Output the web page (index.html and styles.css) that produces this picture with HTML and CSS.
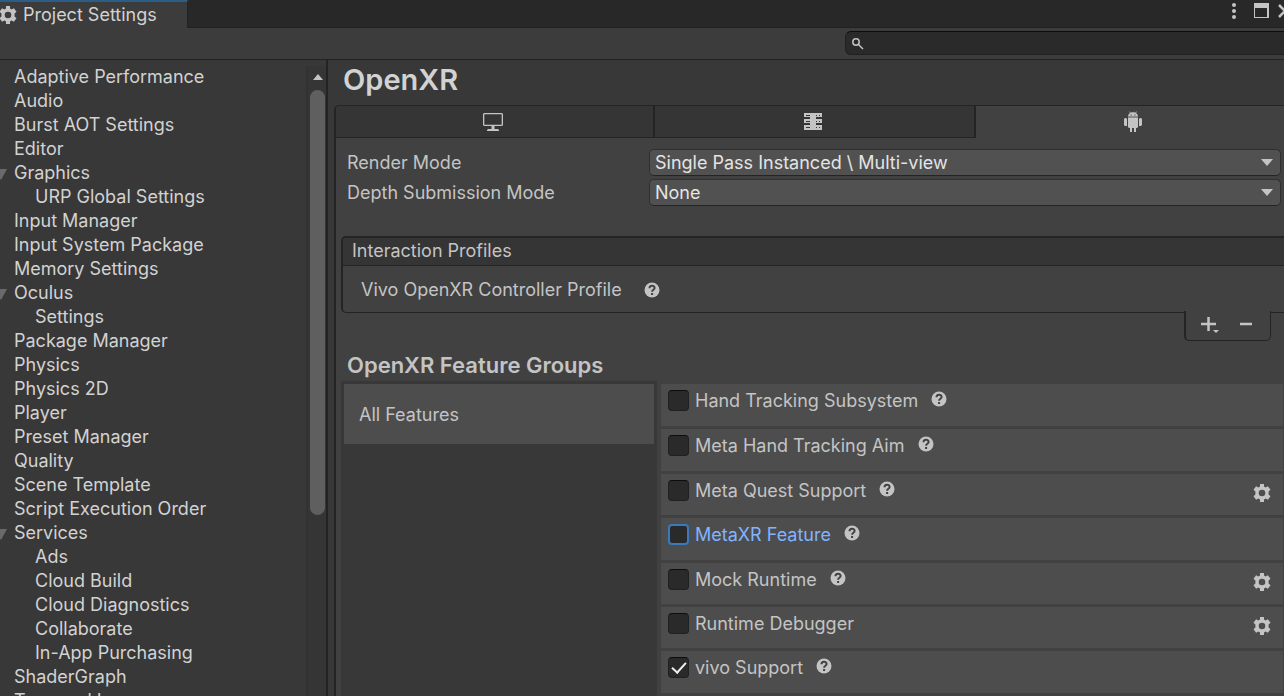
FILE: index.html
```html
<!DOCTYPE html>
<html lang="en">
<head>
<meta charset="utf-8">
<title>Project Settings</title>
<link rel="stylesheet" href="styles.css">
</head>
<body>
<svg class="defs" aria-hidden="true">
  <symbol id="gear" viewBox="0 0 18 18"><path fill-rule="evenodd" d="M7 0h4v2.600l1.600.900 2.300-1.300 2.600 3.600-1.900 1.800v2.800l1.900 1.800-2.600 3.600-2.300-1.300-1.600.900V18H7v-2.600l-1.600-.900-2.300 1.300-2.600-3.600 1.900-1.800V7.600L.500 5.800l2.600-3.600 2.300 1.300L7 2.600zM9 5.700a3.300 3.300 0 1 0 0 6.600 3.300 3.300 0 0 0 0-6.600z"/></symbol>
  <symbol id="help" viewBox="0 0 16 16"><circle cx="8" cy="8" r="7.500"/><path class="mark" d="M5.500 6.200C5.500 3 10.600 3 10.600 6c0 1.800-2.500 1.700-2.500 3.700M8.100 10.900v2"/></symbol>
</svg>
<header class="tabbar">
  <button class="wintab"><svg class="gear" aria-hidden="true"><use href="#gear"/></svg>Project Settings</button>
  <div class="wincontrols">
    <button aria-label="Menu"><svg width="6" height="18" viewBox="0 0 6 18"><circle cx="3" cy="3" r="2"/><circle cx="3" cy="9" r="2"/><circle cx="3" cy="15" r="2"/></svg></button>
    <button aria-label="Maximize"><svg width="16" height="16" viewBox="0 0 16 16"><path fill-rule="evenodd" d="M0 0h15v15H0zM1 5v9h12V5z"/></svg></button>
    <button aria-label="Close"><svg width="14" height="14" viewBox="0 0 14 14"><path class="line" d="M1 1l12 12M13 1L1 13"/></svg></button>
  </div>
</header>
<div class="toolbar">
  <label class="search"><svg width="12" height="12" viewBox="0 0 12 12"><circle class="ring" cx="4" cy="4" r="3.200"/><path class="ring" d="M6.500 6.500L11 11"/></svg><input type="text" aria-label="Search settings"></label>
</div>
<div class="body">
  <nav class="sidebar">
    <ul>
      <li>Adaptive Performance</li><li>Audio</li><li>Burst AOT Settings</li><li>Editor</li>
      <li class="open">Graphics</li><li class="sub">URP Global Settings</li>
      <li>Input Manager</li><li>Input System Package</li><li>Memory Settings</li>
      <li class="open">Oculus</li><li class="sub">Settings</li>
      <li>Package Manager</li><li>Physics</li><li>Physics 2D</li><li>Player</li><li>Preset Manager</li>
      <li>Quality</li><li>Scene Template</li><li>Script Execution Order</li>
      <li class="open">Services</li><li class="sub">Ads</li><li class="sub">Cloud Build</li><li class="sub">Cloud Diagnostics</li><li class="sub">Collaborate</li><li class="sub">In-App Purchasing</li>
      <li>ShaderGraph</li><li>Tags and Layers</li>
    </ul>
    <div class="scrollbar"><span class="up"></span><span class="thumb"></span></div>
  </nav>
  <main>
    <h1>OpenXR</h1>
    <section class="panel">
      <div class="platforms">
        <button aria-label="Desktop"><svg width="22" height="18" viewBox="0 0 22 18"><path fill-rule="evenodd" d="M2 0h18l1 1v11l-1 1h-7.500v3H16l1 1v1H5v-1l1-1h3.500v-3H2l-1-1V1zM2.300 1.300v10.400h17.400V1.300z"/></svg></button>
        <button aria-label="Dedicated server"><svg width="18" height="17" viewBox="0 0 18 17"><path fill-rule="evenodd" d="M0 0h18v4h-6v2h6v4h-6v2h6v5H0v-5h6v-2H0V6h6V4H0zM2 2v1h4V2zM12 2v1h1V2zM15 2v1h1V2zM2 8v1h4V8zM12 8v1h1V8zM15 8v1h1V8zM2 14v1h4v-1zM12 14v1h1v-1zM15 14v1h1v-1z"/></svg></button>
        <button class="active" aria-label="Android"><svg width="18" height="22" viewBox="0 0 18 22"><path d="M4 6c0-2 .8-3.300 2-4L5.200.800l.6-.4.900 1.300c1.400-.5 3.200-.5 4.600 0l.9-1.300.6.400L12 2c1.200.700 2 2 2 4z"/><path class="neck" d="M4 5h10v2H4z"/><path d="M4 7h10v9l-1 1h-1v4h-2v-4H8v4H6v-4H5l-1-1zM0 8l1-1h1l1 1v7H1l-1-1zM15 8l1-1h1l1 1v6l-1 1h-2z"/><path class="eyes" d="M6.500 4h1.200M10.300 4h1.200"/></svg></button>
      </div>
      <div class="fields">
        <label for="render">Render Mode</label>
        <div class="select"><select id="render"><option>Single Pass Instanced \ Multi-view</option></select></div>
        <label for="depth">Depth Submission Mode</label>
        <div class="select"><select id="depth"><option>None</option></select></div>
      </div>
      <section class="profiles">
        <h2>Interaction Profiles</h2>
        <div class="profile">Vivo OpenXR Controller Profile<svg class="help"><use href="#help"/></svg></div>
      </section>
      <div class="actions">
        <button aria-label="Add profile"><svg width="18" height="18" viewBox="0 0 18 18"><path class="line" d="M7.500 1v14M0 8h15"/><path d="M12 14h6l-3 3z"/></svg></button>
        <button aria-label="Remove profile"><svg width="12" height="18" viewBox="0 0 12 18"><path class="line" d="M0 8h12"/></svg></button>
      </div>
      <h3>OpenXR Feature Groups</h3>
      <div class="features">
        <div class="groups"><button>All Features</button></div>
        <ul class="list">
          <li><label><input type="checkbox">Hand Tracking Subsystem</label><svg class="help"><use href="#help"/></svg></li>
          <li><label><input type="checkbox">Meta Hand Tracking Aim</label><svg class="help"><use href="#help"/></svg></li>
          <li class="config"><label><input type="checkbox">Meta Quest Support</label><svg class="help"><use href="#help"/></svg><button aria-label="Configure"><svg class="gear"><use href="#gear"/></svg></button></li>
          <li class="selected"><label><input type="checkbox">MetaXR Feature</label><svg class="help"><use href="#help"/></svg></li>
          <li class="config"><label><input type="checkbox">Mock Runtime</label><svg class="help"><use href="#help"/></svg><button aria-label="Configure"><svg class="gear"><use href="#gear"/></svg></button></li>
          <li class="config"><label><input type="checkbox">Runtime Debugger</label><button aria-label="Configure"><svg class="gear"><use href="#gear"/></svg></button></li>
          <li><label><input type="checkbox" checked>vivo Support</label><svg class="help"><use href="#help"/></svg></li>
        </ul>
      </div>
    </section>
  </main>
</div>
</body>
</html>
```
FILE: styles.css
```css
* { box-sizing: border-box; }
body {
  margin: 0;
  height: 100vh;
  overflow: hidden;
  display: flex;
  flex-direction: column;
  background: #383838;
  color: #d2d2d2;
  font: 18px/24px Inter, "Liberation Sans", sans-serif;
}
ul { list-style: none; margin: 0; padding: 0; }
h1, h2, h3 { margin: 0; }
button { font: inherit; color: inherit; background: none; border: 0; padding: 0; display: flex; align-items: center; }
svg { display: block; fill: #c4c4c4; flex: none; }
.defs { width: 0; height: 0; position: absolute; }
.line { fill: none; stroke: #c4c4c4; stroke-width: 2.500; }
.ring { fill: none; stroke: #c4c4c4; stroke-width: 1.500; }
.mark { fill: none; stroke: #414141; stroke-width: 2; }
.eyes { fill: none; stroke: #414141; stroke-width: 1; }
.neck { fill: #8a8a8a; }
.gear { width: 18px; height: 18px; }
.help { width: 16px; height: 16px; }

.tabbar { flex: none; height: 28px; display: flex; justify-content: space-between; background: #282828; border-bottom: 1px solid #222; }
.wintab { height: 28px; width: 189px; background: #3c3c3c; border-top: 2px solid #2c5d87; border-right: 1px solid #222; gap: 6px; margin-left: -1px; white-space: nowrap; }
.wincontrols { display: flex; align-items: flex-start; gap: 17px; padding-top: 2px; margin-right: -8px; }
.wincontrols button + button { padding-top: 1px; }
.wincontrols button + button + button { margin-left: -9px; padding-top: 2px; }

.toolbar { flex: none; height: 32px; display: flex; justify-content: flex-end; align-items: flex-start; padding-top: 3px; background: #3c3c3c; border-bottom: 1px solid #232323; }
.search { width: 439px; height: 24px; display: flex; align-items: center; padding: 1px 0 0 6px; background: #2a2a2a; border: 1px solid #212121; border-top-color: #0d0d0d; border-right: 0; border-radius: 6px 0 0 6px; }
.search input { flex: 1; background: none; border: 0; outline: 0; color: inherit; font: inherit; height: 20px; }

.body { flex: 1; min-height: 0; display: flex; }
.sidebar { flex: none; width: 328px; display: flex; justify-content: space-between; border-right: 2px solid #232323; overflow: hidden; }
.sidebar ul { padding-top: 5px; }
.sidebar li { display: flex; align-items: center; height: 24px; padding-left: 14px; white-space: nowrap; }
.sidebar .sub { padding-left: 35px; }
.open::before { content: ""; border: 6px solid transparent; border-top: 11px solid #6a6a6a; border-bottom: 0; margin: 2px 7px 0 -19px; }
.scrollbar { width: 20px; margin-top: 6px; border-left: 2px solid #323232; background: #353535; display: flex; flex-direction: column; align-items: center; padding: 8px 1px 0 2px; }
.up { border: 5px solid transparent; border-bottom: 6px solid #c4c4c4; border-top: 0; }
.thumb { width: 15px; height: 425px; margin-top: 10px; border-radius: 8px; background: #5f5f5f; }

main { flex: 1; min-width: 0; display: flex; flex-direction: column; padding-left: 6px; }
h1 { font-size: 29px; line-height: 40px; font-weight: 600; padding-left: 9px; height: 45px; }
.panel { flex: 1; min-height: 0; display: flex; flex-direction: column; background: #414141; border: solid #242424; border-width: 1px 0 0 2px; border-radius: 5px 0 0 0; color: #c4c4c4; overflow: hidden; }
.platforms { display: grid; grid-template-columns: 319fr 321fr 308fr; height: 32px; }
.platforms button { justify-content: center; background: #353535; border-bottom: 1px solid #242424; border-right: 2px solid #242424; padding-right: 3px; }
.platforms button:first-child { border-radius: 4px 0 0 0; }
.platforms .active { background: none; border: 0; padding: 0 0 0 5px; }
.fields { display: grid; grid-template-columns: 302px 1fr; row-gap: 3px; padding: 11px 3px 0 11px; line-height: 27px; }
.select { display: grid; align-items: center; }
.select::after { content: ""; grid-area: 1 / 1; justify-self: end; margin-right: 8px; border: 6px solid transparent; border-top: 7px solid #c4c4c4; border-bottom: 0; pointer-events: none; }
.select select { grid-area: 1 / 1; appearance: none; width: 100%; height: 27px; padding: 0 5px; font: inherit; line-height: 24px; color: #e4e4e4; background: #515151; border: 1px solid #303030; border-bottom-color: #242424; border-radius: 5px; }
.profiles { margin: 30px 0 0 5px; border: solid #242424; border-width: 2px 0 1px 2px; border-radius: 5px 0 0 5px; }
h2 { font-size: 18px; font-weight: 400; line-height: 26px; padding: 0 0 1px 9px; background: #353535; border-bottom: 1px solid #242424; border-radius: 4px 0 0 0; }
.profile { display: flex; align-items: center; gap: 22px; height: 46px; padding: 2px 0 0 18px; }
.actions { position: relative; display: flex; justify-content: space-between; width: 87px; height: 30px; margin: -2px 13px 0 auto; padding: 0 18px 1px 15px; background: #414141; border: solid #242424; border-width: 0 1px 1px 2px; border-radius: 0 0 5px 5px; }
h3 { font-size: 22px; line-height: 28px; font-weight: 600; padding: 10px 0 2px 11px; }
.features { flex: 1; min-height: 0; display: flex; gap: 4px; padding-left: 5px; }
.groups { flex: none; width: 316px; padding: 3px 3px 0; background: #383838; }
.groups button { width: 100%; height: 60px; padding: 2px 0 0 15px; background: #4d4d4d; }
.list { flex: 1; display: flex; flex-direction: column; gap: 3px; padding: 3px 1px 0 0; }
.list li { flex: none; display: flex; align-items: flex-start; height: 42px; background: #4d4d4d; padding: 6px 12px 0 7px; }
.list .config { height: 41px; }
.list label { display: flex; align-items: center; gap: 6px; line-height: 21px; }
.list .help { margin: 1px 0 0 13px; }
.list button { margin: 4px 0 0 auto; }
.list input { appearance: none; display: grid; place-items: center; width: 21px; height: 21px; margin: 0; background: #2a2a2a; border: 1px solid #202020; border-top-color: #0d0d0d; border-radius: 4px; }
.list input:checked::after { content: ""; width: 6px; height: 12px; border: solid #eee; border-width: 0 2px 2px 0; transform: rotate(42deg); margin-bottom: 3px; }
.selected label { color: #81b4ff; }
.list .selected input { border: 2px solid #3a79bb; }
```
